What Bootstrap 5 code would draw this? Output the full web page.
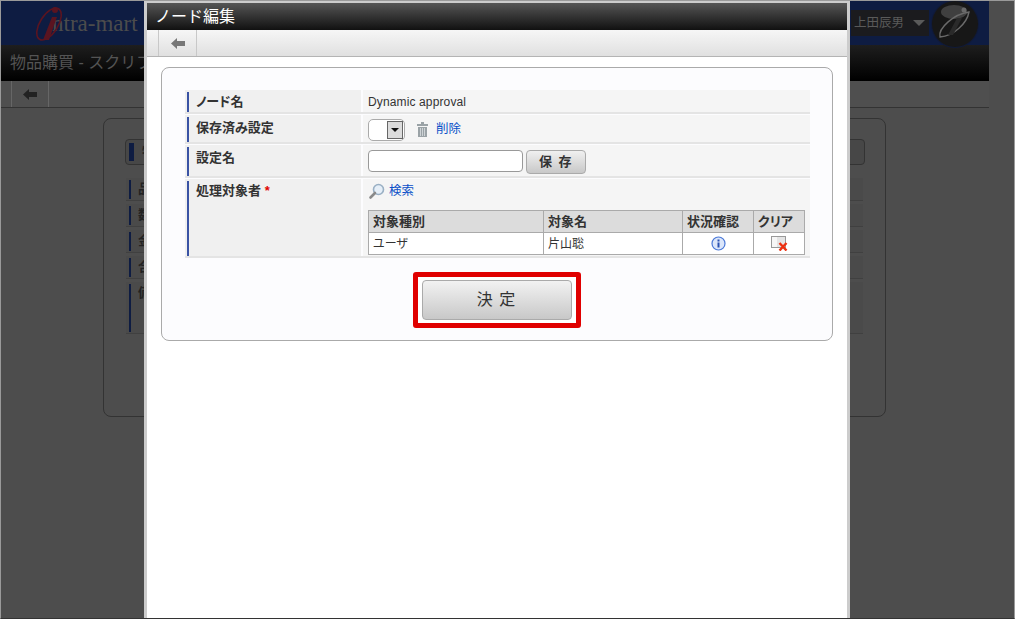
<!DOCTYPE html>
<html lang="ja">
<head>
    <meta charset="UTF-8">
    <meta name="viewport" content="width=device-width, initial-scale=1.0">
    <title>ノード編集</title>
    <link href="https://cdn.jsdelivr.net/npm/bootstrap@5.3.2/dist/css/bootstrap.min.css" rel="stylesheet">
    <style>
        html, body { height: 100%; }
        body { background: #4d4d4d; overflow: hidden; font-family: "Liberation Sans", "Noto Sans CJK JP", sans-serif; font-size: 13px; color: #333; font-feature-settings: "palt"; }
        .shot-frame { position: relative; width: 1015px; height: 619px; overflow: hidden; border: 1px solid #9a9a9a; border-bottom-color: #333; padding-right: 25px; }

        /* dimmed page behind the dialog */
        .top-brand { height: 44px; background: #0e1c42; }
        .brand-logo { position: relative; margin-left: 51px; color: #4c4c4c; font-family: "Liberation Serif", serif; font-size: 23px; line-height: 45px; }
        .brand-logo svg { position: absolute; left: -19px; top: 3px; }
        .user-box { width: 78px; height: 26px; margin-top: 9px; background: #1b1b1e; color: #5a5a5a; font-size: 12.5px; padding-left: 3px; gap: 9px; }
        .user-caret { border-left: 6px solid transparent; border-right: 6px solid transparent; border-top: 6px solid #5a5a5a; }
        .user-emblem { width: 46px; height: 46px; margin: 0 11px 0 3px; border-radius: 50%; background: #171717; box-shadow: 0 0 0 1px #101a38; }
        .title-strip { height: 36px; background: linear-gradient(#1e1e1e, #000); color: #545454; font-size: 16px; line-height: 36px; padding-left: 9px; font-feature-settings: normal; }
        .tool-strip { height: 27px; background: #4f4f4f; border-bottom: 1px solid #333; padding-left: 10px; }
        .tool-btn { width: 38px; height: 26px; border-left: 1px solid #666; border-right: 1px solid #666; }
        .back-page { margin: 10px 103px 0 102px; height: 299px; border: 1px solid #333; border-radius: 8px; padding: 20px 20px 0 21px; }
        .back-head { display: flex; gap: 8px; height: 26px; border: 1px solid #333; border-radius: 4px; background: #474747; padding: 3px; font-weight: 700; color: #222; line-height: 18px; }
        .back-head i { display: block; width: 5px; height: 18px; background: #0e1c42; }
        .back-rows { margin: 13px 2px 0 1px; }
        .back-row { display: flex; gap: 7px; height: 23px; margin-bottom: 3px; background: #4a4a4a; border-bottom: 1px solid #404040; padding: 2px 0 1px 3px; font-weight: 700; color: #222; line-height: 18px; }
        .back-row.tall-row { height: 52px; }
        .back-row i { display: block; width: 2px; background: #0e1c42; }

        /* dialog */
        .node-dialog { position: absolute; left: 143px; top: -1px; bottom: -1px; width: 706px; background: #fff; border: 3px solid #ccc; border-bottom: 0; }
        .node-title { height: 27px; background: linear-gradient(#555, #111); color: #fff; font-size: 16px; line-height: 27px; padding-left: 8px; font-feature-settings: normal; }
        .node-tools { height: 27px; background: linear-gradient(#f6f6f6, #e0e0e0); border-bottom: 1px solid #b4b4b4; padding-left: 11px; }
        .node-tools .tool-btn { width: 39px; border-color: #c8c8c8; }
        .form-panel { margin: 10px 14px 0; height: 274px; background: #fcfcfe; border: 1px solid #aaa; border-radius: 8px; padding: 22px 22px 0 23px; }
        .form-line { display: flex; gap: 2px; border-bottom: 2px solid #e4e4e4; margin-bottom: 1px; }
        .form-key { width: 176px; flex: none; background: #f0f0f0; font-weight: 700; padding: 2px 0 0 2px; }
        .form-key div { height: 100%; border-left: 2px solid #3a53a4; padding: 1px 0 0 7px; line-height: 18px; }
        .form-val { flex: 1; background: #f5f5f5; padding: 0 5px; }
        .line-a { height: 24px; } .line-b { height: 29px; } .line-c { height: 33px; } .line-d { height: 79px; margin-bottom: 0; }
        .line-a .form-val, .line-b .form-val { padding-top: 2px; }
        .line-b .form-key div, .line-c .form-key div { padding-top: 2px; }
        .line-c .form-val { padding-top: 1px; }
        .req-mark { color: #e00000; }
        .plain-value { font-size: 12px; letter-spacing: .13px; }
        .pick-box { width: 37px; height: 22px; border: 1px solid #aaa; border-radius: 5px; background: #fff; padding: 1px 1px 0 18px; }
        .pick-arrow { display: flex; align-items: center; justify-content: center; width: 16px; height: 18px; background: #dcdcdc; border: 1px solid #666; }
        .pick-arrow::after { content: ""; border-left: 4px solid transparent; border-right: 4px solid transparent; border-top: 4px solid #111; }
        .trash-icon { margin: 0 7px 0 11px; }
        .link-jump { color: #0a50c8; text-decoration: none; font-size: 12.5px; }
        .name-input { width: 155px; height: 22px; border: 1px solid #999; border-radius: 4px; background: #fff; }
        .save-btn { width: 60px; height: 24px; margin-left: 3px; padding: 0; border: 1px solid #aaa; border-radius: 4px; background: linear-gradient(#f0f0f0, #c8c8c8); font-size: 13px; font-weight: 700; letter-spacing: 1.5px; color: #333; }
        .search-row { height: 22px; margin-bottom: 9px; padding-top: 2px; }
        .target-table { width: 436px; margin: 0; table-layout: fixed; border-collapse: collapse; }
        .target-table th, .target-table td { height: 22px; padding: 0 4px; border: 1px solid #aaa; color: #333; vertical-align: middle; }
        .target-table th { background: #dcdcdc; font-weight: 700; }
        .target-table td { background: #fff; font-weight: 400; font-size: 12px; }
        .confirm-wrap { margin-top: 14px; padding-right: 2px; }
        .confirm-ring { width: 168px; height: 56px; border: 5px solid #e00000; border-radius: 3px; padding: 3px 4px; background: #fff; }
        .confirm-btn { width: 150px; height: 40px; padding: 0; border: 1px solid #aaa; border-radius: 4px; background: linear-gradient(#f2f2f2, #c8c8c8); font-size: 16px; letter-spacing: 1px; color: #333; font-feature-settings: normal; }
    </style>
</head>
<body>
    <div class="shot-frame">
        <div class="top-brand d-flex">
            <div class="brand-logo flex-grow-1">
                <svg width="36" height="38" viewBox="0 0 36 38"><ellipse cx="16" cy="20" rx="9" ry="18" transform="rotate(32 16 20)" fill="none" stroke="#5a1420" stroke-width="1.6"/><path d="M19 13 24 13 16 36 10 36Z" fill="#5a1420"/><circle cx="22" cy="6" r="3" fill="#5a1420"/></svg>
                <span>ntra-mart</span>
            </div>
            <div class="user-box d-flex align-items-center">上田辰男<span class="user-caret"></span></div>
            <div class="user-emblem d-flex align-items-center justify-content-center">
                <svg width="46" height="46" viewBox="0 0 46 46"><ellipse cx="22" cy="11" rx="13" ry="7" fill="#3f3f3f"/><path d="M8 36C6 27 22 13 37 11 35 22 22 35 8 36Z" fill="none" stroke="#6a6a6a" stroke-width="1.4"/><path d="M25 17 30 17 21 34 16 34Z" fill="#2a2a2a"/><circle cx="32" cy="9" r="2.5" fill="#6a6a6a"/></svg>
            </div>
        </div>
        <div class="title-strip">物品購買 - スクリプト</div>
        <div class="tool-strip">
            <div class="tool-btn d-flex align-items-center justify-content-center">
                <svg width="14" height="11" viewBox="0 0 14 11"><path d="M0 5.5 6 0V3H14V8H6V11Z" fill="#222"/></svg>
            </div>
        </div>
        <div class="back-page">
            <div class="back-head"><i></i>物品</div>
            <div class="back-rows">
                <div class="back-row"><i></i>品名</div>
                <div class="back-row"><i></i>数量</div>
                <div class="back-row"><i></i>金額</div>
                <div class="back-row"><i></i>合計</div>
                <div class="back-row tall-row"><i></i>備考</div>
            </div>
        </div>

        <div class="node-dialog">
            <div class="node-title">ノード編集</div>
            <div class="node-tools">
                <div class="tool-btn d-flex align-items-center justify-content-center">
                    <svg width="14" height="11" viewBox="0 0 14 11"><path d="M0 5.5 6 0V3H14V8H6V11Z" fill="#777"/></svg>
                </div>
            </div>
            <div class="form-panel">
                <div class="form-line line-a">
                    <div class="form-key"><div>ノード名</div></div>
                    <div class="form-val plain-value d-flex align-items-center">Dynamic approval</div>
                </div>
                <div class="form-line line-b">
                    <div class="form-key"><div>保存済み設定</div></div>
                    <div class="form-val d-flex align-items-center">
                        <div class="pick-box"><span class="pick-arrow"></span></div>
                        <svg class="trash-icon" width="13" height="15" viewBox="0 0 13 15"><path d="M1 2H5V0H8V2H12V4H1ZM2 5H11V15H2Z" fill="#9aa2a6"/><path d="M4.5 6V14M6.5 6V14M8.5 6V14" stroke="#ced3d6"/></svg>
                        <a class="link-jump" href="#">削除</a>
                    </div>
                </div>
                <div class="form-line line-c">
                    <div class="form-key"><div>設定名</div></div>
                    <div class="form-val d-flex align-items-start">
                        <input class="name-input mt-1" type="text">
                        <button class="save-btn mt-1" type="button">保 存</button>
                    </div>
                </div>
                <div class="form-line line-d">
                    <div class="form-key"><div>処理対象者 <span class="req-mark">*</span></div></div>
                    <div class="form-val">
                        <div class="search-row d-flex align-items-center gap-1">
                            <svg width="17" height="17" viewBox="0 0 17 17"><circle cx="10.5" cy="6.5" r="5" fill="#e6eff8" stroke="#9ab0c4" stroke-width="1.6"/><path d="M7 10 2.5 14.5" stroke="#8a8a8a" stroke-width="2.6" stroke-linecap="round"/></svg>
                            <a class="link-jump" href="#">検索</a>
                        </div>
                        <table class="target-table">
                            <colgroup><col style="width:175px"><col style="width:139px"><col style="width:71px"><col style="width:51px"></colgroup>
                            <thead><tr><th>対象種別</th><th>対象名</th><th>状況確認</th><th>クリア</th></tr></thead>
                            <tbody>
                                <tr>
                                    <td>ユーザ</td>
                                    <td>片山聡</td>
                                    <td class="text-center">
                                        <svg class="d-block mx-auto" width="15" height="15" viewBox="0 0 15 15"><circle cx="7.5" cy="7.5" r="6.5" fill="#dbe6fa" stroke="#4a78d8" stroke-width="1.2"/><rect x="6.5" y="6.5" width="2" height="5" fill="#2a50b0"/><rect x="6.5" y="3.5" width="2" height="2" fill="#2a50b0"/></svg>
                                    </td>
                                    <td class="text-center">
                                        <svg class="d-block mx-auto" width="17" height="15" viewBox="0 0 17 15"><rect x="0.5" y="0.5" width="14" height="11" fill="#e4e4e4" stroke="#999"/><rect x="1" y="1" width="5" height="10" fill="#f6f6f6"/><path d="M8.5 7 15.5 14.5M15.5 7 8.5 14.5" stroke="#ee3010" stroke-width="2.4"/></svg>
                                    </td>
                                </tr>
                            </tbody>
                        </table>
                    </div>
                </div>
                <div class="confirm-wrap d-flex justify-content-center">
                    <div class="confirm-ring"><button class="confirm-btn" type="button">決 定</button></div>
                </div>
            </div>
        </div>
    </div>
    <script src="https://cdn.jsdelivr.net/npm/bootstrap@5.3.2/dist/js/bootstrap.bundle.min.js"></script>
</body>
</html>
